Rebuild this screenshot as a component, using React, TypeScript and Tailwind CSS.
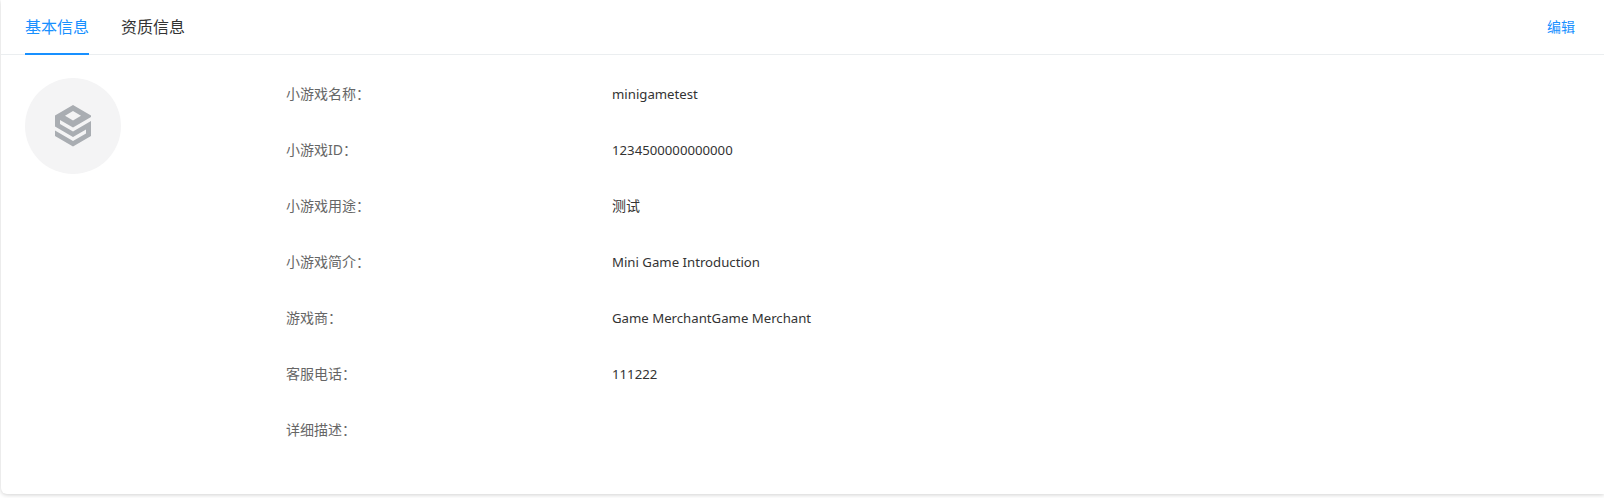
const rows = [
  { label: "小游戏名称：", value: "minigametest", size: "text-[13.2px]" },
  { label: "小游戏ID：", value: "1234500000000000", size: "text-[13.2px]" },
  { label: "小游戏用途：", value: "测试", size: "text-sm" },
  { label: "小游戏简介：", value: "Mini Game Introduction", size: "text-[13.2px]" },
  { label: "游戏商：", value: "Game MerchantGame Merchant", size: "text-[13.2px]" },
  { label: "客服电话：", value: "111222", size: "text-[13.2px]" },
  { label: "详细描述：", value: "", size: "text-sm" },
]

function GameIcon() {
  return (
    <svg width="36" height="42" viewBox="0 0 36 42" fill="#a9adb2">
      <path
        fillRule="evenodd"
        d="M18 0 L36 10.5 L36 12 L18 22.5 L5 15 L5 19 L18 26.5 L36 16 L36 31 L18 41.5 L0 31 L0 25.5 L18 36 L31 28.5 L31 24.5 L18 32 L0 21.5 L0 10.5 Z M18 6 L10 10.8 L18 15.5 L26 10.8 Z"
      />
    </svg>
  )
}

export default function App() {
  return (
    <div className="h-[498px] bg-white font-['Noto_Sans','Noto_Sans_CJK_SC',sans-serif]">
      <div className="ml-px h-[494px] rounded-bl-md bg-white shadow-[0_1px_4px_rgba(0,0,0,0.18)]">
        <div className="flex h-[55px] items-stretch justify-between border-b border-[#ebeef0] pl-6 pr-[29px]">
          <div className="flex gap-8">
            <div className="mb-[-1px] flex items-center border-b-2 border-[#1890ff] text-base text-[#1890ff]">基本信息</div>
            <div className="flex items-center text-base text-[#333333]">资质信息</div>
          </div>
          <div className="flex items-center text-sm text-[#1890ff]">编辑</div>
        </div>
        <div className="flex pl-6 pt-[23px]">
          <div className="flex h-24 w-24 items-center justify-center rounded-full bg-[#f4f4f5]">
            <GameIcon />
          </div>
          <div className="ml-[165px] flex flex-col">
            {rows.map((row) => (
              <div key={row.label} className="flex h-[56px] pt-[6px] text-sm leading-5">
                <div className="w-[326px] text-[#666666]">{row.label}</div>
                <div className={`${row.size} text-[#333333]`}>{row.value}</div>
              </div>
            ))}
          </div>
        </div>
      </div>
    </div>
  )
}
